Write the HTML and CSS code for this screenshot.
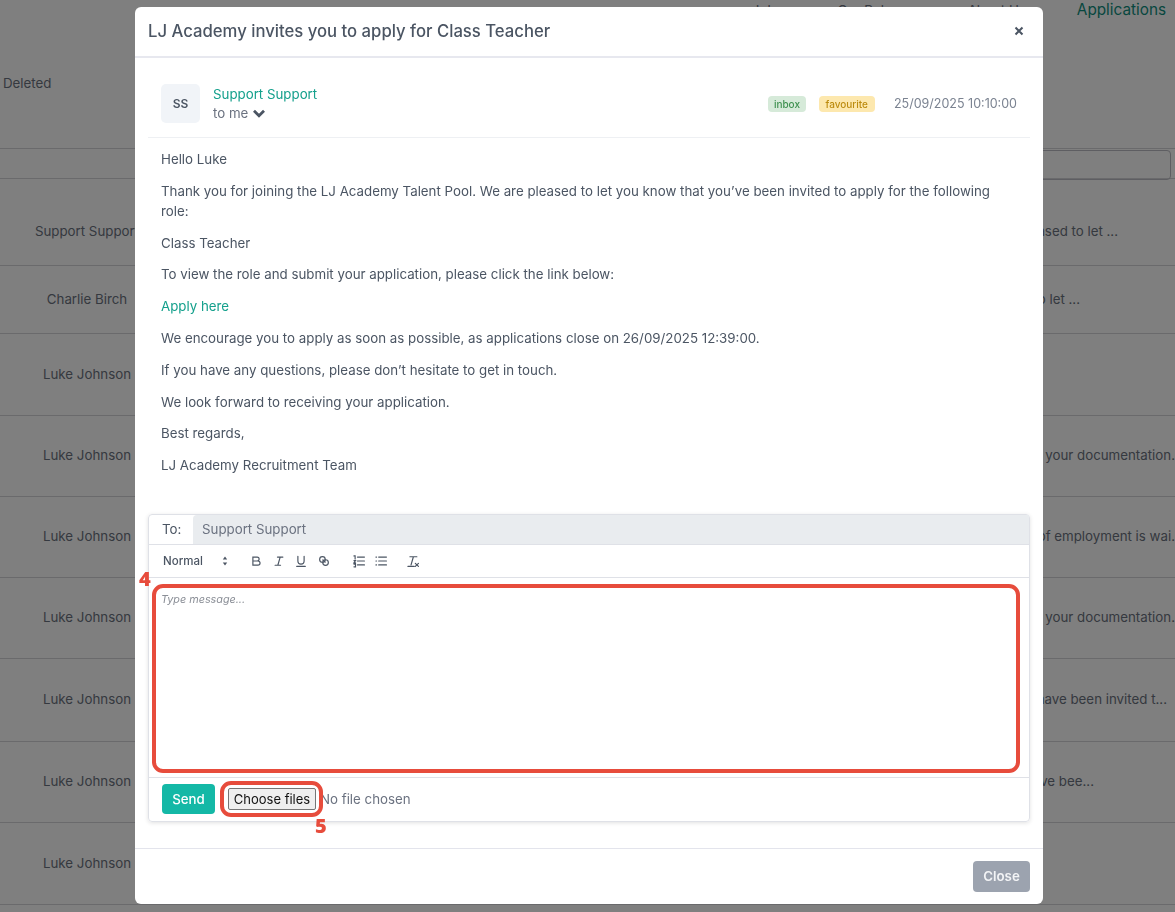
FILE: index.html
```html
<!DOCTYPE html>
<html lang="en">
<head>
<meta charset="utf-8">
<title>Message</title>
<link rel="stylesheet" href="styles.css">
</head>
<body>
<div class="page">
  <nav class="topnav"><span class="navlink n1">Jobs</span><span class="navlink n2">Our Roles</span><span class="navlink n3">About Us</span><span class="toplink">Applications</span></nav>
  <div class="tabs"><span>Deleted</span></div>
  <div class="searchrow"><div class="searchbox"></div></div>
  <div class="row r87"><span class="who">Support Support</span><span class="msg m1">We are pleased to let ...</span></div>
  <div class="row r68"><span class="who">Charlie Birch</span><span class="msg m2">pleased to let ...</span></div>
  <div class="row r82"><span class="who">Luke Johnson</span></div>
  <div class="row r81"><span class="who">Luke Johnson</span><span class="msg">your documentation.</span></div>
  <div class="row r81"><span class="who">Luke Johnson</span><span class="msg">of employment is wai.</span></div>
  <div class="row r81"><span class="who">Luke Johnson</span><span class="msg">your documentation.</span></div>
  <div class="row r83"><span class="who">Luke Johnson</span><span class="msg m5">have been invited t...</span></div>
  <div class="row r81"><span class="who">Luke Johnson</span><span class="msg m6">you have bee...</span></div>
  <div class="row r82"><span class="who">Luke Johnson</span></div>
</div>
<div class="backdrop"></div>
<div class="modal">
  <header class="modal-head">
    <h1>LJ Academy invites you to apply for Class Teacher</h1>
    <svg class="x" viewBox="0 0 10 10" width="10" height="10"><path d="M1.5 1.5l7 7M8.5 1.5l-7 7"/></svg>
  </header>
  <div class="modal-body">
    <div class="mailhead">
      <div class="avatar">SS</div>
      <div class="sender">
        <a class="green">Support Support</a>
        <div class="tome">to me <svg class="chev" viewBox="0 0 14 9" width="14" height="9"><path d="M2 1.800l5 5 5-5"/></svg></div>
      </div>
      <div class="meta">
        <span class="badge inbox">inbox</span>
        <span class="badge fav">favourite</span>
        <span class="date">25/09/2025 10:10:00</span>
      </div>
    </div>
    <div class="mailtext">
      <p>Hello Luke</p>
      <p>Thank you for joining the LJ Academy Talent Pool. We are pleased to let you know that you’ve been invited to apply for the following role:</p>
      <p>Class Teacher</p>
      <p>To view the role and submit your application, please click the link below:</p>
      <p><a class="green">Apply here</a></p>
      <p>We encourage you to apply as soon as possible, as applications close on 26/09/2025 12:39:00.</p>
      <p>If you have any questions, please don’t hesitate to get in touch.</p>
      <p>We look forward to receiving your application.</p>
      <p>Best regards,</p>
      <p>LJ Academy Recruitment Team</p>
    </div>
    <div class="reply">
      <div class="toline"><span class="tolabel">To:</span><span class="tovalue">Support Support</span></div>
      <div class="toolbar">
        <span class="normal">Normal</span>
        <svg class="arrows" viewBox="0 0 8 12" width="8" height="12"><path d="M4 1.5L6.2 4.5H1.8zM4 10.5L1.8 7.5H6.2z"/></svg>
        <span class="tg t1">
          <svg class="ts" viewBox="0 0 18 18" width="14" height="14"><path d="M5 4h5.500a2.500 2.500 0 0 1 0 5H5zM5 9h6.500a2.700 2.700 0 0 1 0 5.400H5z"/></svg>
          <svg class="ts" viewBox="0 0 18 18" width="14" height="14"><path d="M7 4h7M4 14.500h7M10.500 4L7.500 14.500"/></svg>
          <svg class="ts" viewBox="0 0 18 18" width="14" height="14"><path d="M5 3v6a4 4 0 0 0 8 0V3M3.500 16h11"/></svg>
          <svg class="ts" viewBox="0 0 18 18" width="14" height="14"><circle cx="7" cy="7" r="3.600"/><circle cx="11" cy="11" r="3.600"/><path d="M7.500 7.500l3 3"/></svg>
        </span>
        <span class="tg t2">
          <svg class="ts" viewBox="0 0 18 18" width="14" height="14"><path d="M7 4h9M7 9h9M7 14h9M2.500 2.500h1.500v4M2.500 8.500h2l-2 3h2M2.500 13h2v3.500h-2"/></svg>
          <svg class="ts" viewBox="0 0 18 18" width="14" height="14"><path d="M6 4h10M6 9h10M6 14h10M2.500 4h.8M2.500 9h.8M2.500 14h.8"/></svg>
        </span>
        <span class="tg t3">
          <svg class="ts" viewBox="0 0 18 18" width="14" height="14"><path d="M5 3.500h9M9.500 3.500L6.500 14M2.500 16h8M12 12l4 4M16 12l-4 4"/></svg>
        </span>
      </div>
      <div class="editor">
        <span class="num n4">4</span>
        <div class="redbox"><em>Type message...</em></div>
      </div>
      <div class="actions">
        <button class="send" type="button">Send</button>
        <span class="filewrap">
          <button class="choose" type="button">Choose files</button>
          <span class="num n5">5</span>
        </span>
        <span class="nofile">No file chosen</span>
      </div>
    </div>
  </div>
  <footer class="modal-foot"><button class="close" type="button">Close</button></footer>
</div>
</body>
</html>
```

FILE: styles.css
```css
* { box-sizing: border-box; }
html, body { margin: 0; height: 100%; overflow: hidden; }
body { font-family: "Inter", "Liberation Sans", sans-serif; font-size: 13.3px; color: #4b5563; background: #fff; }
.page { height: 912px; overflow: hidden; color: #6b7280; }
.topnav { height: 41px; display: flex; justify-content: flex-end; padding-right: 9px; line-height: 20px; }
.n1 { margin-right: 55px; }
.n2 { margin-right: 69px; }
.n3 { margin-right: 51px; }
.toplink { color: #0f8f80; font-size: 15.300px; }
.tabs { height: 108px; padding: 34px 0 0 3px; line-height: 16px; border-bottom: 1px solid #d4d4d8; }
.searchrow { height: 30px; padding-top: 1px; border-bottom: 1px solid #d4d4d8; display: flex; justify-content: flex-end; padding-right: 4px; }
.searchbox { width: 300px; height: 30px; border: 1px solid #bcbcc4; border-radius: 4px; margin-bottom: -2px; }
.row { display: flex; align-items: center; justify-content: space-between; padding-bottom: 2px; border-bottom: 1px solid #d4d4d8; white-space: nowrap; }
.r87 { height: 87px; padding-top: 19px; }
.r68 { height: 68px; }
.r82 { height: 82px; }
.r81 { height: 81px; }
.r83 { height: 83px; }
.who { width: 174px; text-align: center; }
.msg { flex: none; }
.m1 { margin-right: 57px; }
.m2 { margin-right: 95px; }
.m5 { margin-right: 8px; }
.m6 { margin-right: 81px; }
.backdrop { position: fixed; inset: 0; background: rgba(0,0,0,.5); }
.modal { position: fixed; left: 135px; top: 7px; width: 908px; height: 897px; background: #fff; border-radius: 6px; display: flex; flex-direction: column; overflow: hidden; }
.modal-head { height: 51px; flex: none; display: flex; align-items: center; justify-content: space-between; padding: 0 19px 2px 13px; border-bottom: 2px solid #e7e8ef; }
h1 { margin: 0; font-size: 16.7px; font-weight: 500; color: #4b5563; }
.x { fill: none; stroke: #4b5563; stroke-width: 2; }
.modal-body { flex: 1; padding: 0 13px; display: flex; flex-direction: column; }
.mailhead { flex: none; height: 80px; display: flex; align-items: center; border-bottom: 1px solid #eef0f3; padding: 12px 13px 0; }
.avatar { width: 39px; height: 39px; border-radius: 5px; background: #f1f4f8; color: #4b5563; font-weight: 600; font-size: 12px; display: flex; align-items: center; justify-content: center; }
.sender { margin-left: 13px; line-height: 19px; }
.green { color: #14a08c; }
.tome { color: #6b7280; display: flex; align-items: center; gap: 4px; }
.chev { fill: none; stroke: #4b5563; stroke-width: 2.8; }
.meta { margin-left: auto; display: flex; align-items: center; }
.badge { font-size: 10px; line-height: 16px; height: 16px; padding: 0 5.500px; border-radius: 4px; font-weight: 500; }
.inbox { background: #d6ead9; color: #3f9150; }
.fav { background: #fde8ae; color: #bd8c10; margin-left: 13px; padding: 0 7px; }
.date { margin-left: 19px; color: #7b8391; font-size: 12.5px; }
.mailtext { flex: none; height: 376px; padding: 11px 30px 0 13px; }
.mailtext p { margin: 0 0 11.800px; line-height: 20px; }
.reply { flex: none; height: 308px; border: 1px solid #dfe1e7; border-radius: 4px; box-shadow: 0 1px 4px rgba(0,0,0,.12); display: flex; flex-direction: column; }
.toline { flex: none; height: 30px; display: flex; align-items: stretch; border-bottom: 1px solid #dfe1e7; }
.tolabel { width: 44px; display: flex; align-items: center; padding: 0 0 2px 13px; }
.tovalue { flex: 1; background: #e9ecef; display: flex; align-items: center; padding: 0 0 2px 9px; border-radius: 4px 0 0 0; color: #6b7280; }
.toolbar { flex: none; height: 33px; display: flex; align-items: center; padding-left: 14px; border-bottom: 1px solid #dfe1e7; }
.normal { font-size: 11.500px; font-weight: 500; width: 58px; }
.arrows { fill: #4b5563; }
.ts { fill: none; stroke: #4b5563; stroke-width: 1.500; stroke-linecap: round; flex: none; }
.tg { display: flex; gap: 8.500px; }
.t1 { margin-left: 20px; }
.t2 { margin-left: 21px; }
.t3 { margin-left: 18px; }
.editor { position: relative; flex: 1; padding: 6px 9px 4px 3px; border-bottom: 1px solid #dfe1e7; }
.redbox { height: 100%; border: 4px solid #e74c3c; border-radius: 11px; padding: 4px 5px; }
.redbox em { font-size: 10.800px; color: #8b8f97; display: block; line-height: 16px; }
.num { position: absolute; color: #e74c3c; font-family: "Open Sans", "Liberation Sans", sans-serif; font-weight: 800; font-size: 20px; line-height: 20px; }
.n4 { left: -10px; top: -9px; }
.actions { flex: none; height: 43px; display: flex; align-items: center; padding: 0 0 2px 13px; }
.send { background: #14b8a6; color: #fff; border: 0; border-radius: 4px; width: 53px; height: 30px; font: inherit; font-weight: 500; }
.filewrap { position: relative; z-index: 1; margin-left: 5px; border: 4px solid #e74c3c; border-radius: 11px; height: 36px; padding: 0 3px 0 4px; display: flex; align-items: center; }
.choose { background: #efefef; border: 1px solid #767676; border-radius: 2px; height: 22px; width: 88px; padding: 0; font: 13px "Inter", sans-serif; color: #111; }
.n5 { left: 91px; top: 31px; }
.nofile { margin-left: -3px; color: #6b7280; }
.modal-foot { flex: none; height: 56px; border-top: 1px solid #e3e4ec; display: flex; justify-content: flex-end; align-items: center; padding: 0 13px 1px; }
.close { background: #9ca3af; color: #f3f4f6; border: 0; border-radius: 4px; width: 57px; height: 31px; font: inherit; font-weight: 600; }
```
